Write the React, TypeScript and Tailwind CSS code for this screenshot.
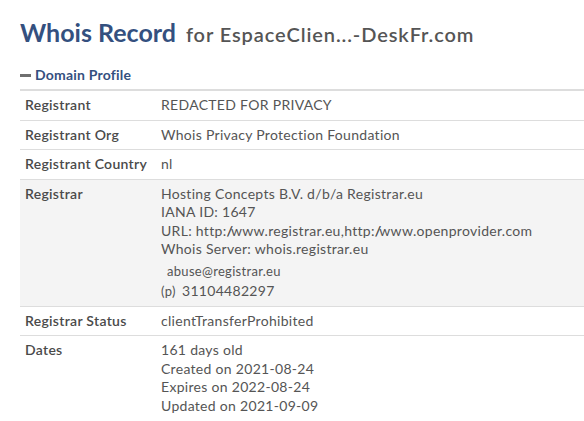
import React from "react";

const Row = ({ label, children, gray }: { label: string; children: React.ReactNode; gray?: boolean }) => (
  <div className={`flex border-b border-[#dddddd] ${gray ? "bg-[#f4f4f4]" : "bg-white"}`}>
    <div className="w-[141px] shrink-0 pl-[5px] py-[5px] font-semibold text-[#4a4a4a]">{label}</div>
    <div className="flex-1 py-[5px] text-[#555555]">{children}</div>
  </div>
);

const Sl = () => <span className="tracking-[-3px] mr-[1px]">//</span>;

export default function App() {
  return (
    <div className="bg-white min-h-[421px] w-[584px] overflow-hidden pl-[20px]" style={{ fontFamily: "Lato, 'Open Sans', sans-serif" }}>
      <div className="pt-[17px] flex items-baseline whitespace-nowrap">
        <span className="text-[25px] font-bold text-[#34507f] leading-[30px]">Whois Record</span>
        <span className="ml-[10px] text-[20px] font-semibold tracking-[0.9px] text-[#555555]">for EspaceClien...-DeskFr.com</span>
      </div>
      <div className="mt-[17px] flex items-center text-[14px] font-bold tracking-[0.2px] text-[#34507f] leading-[18px]">
        <span className="inline-block w-[11px] h-[3px] bg-[#6f6f6f] mr-[4px]"></span>
        Domain Profile
      </div>
      <div className="mt-[5px] border-t-2 border-[#dddddd] text-[14px] tracking-[0.3px] leading-[18.5px] whitespace-nowrap">
        <Row label="Registrant">REDACTED FOR PRIVACY</Row>
        <Row label="Registrant Org">Whois Privacy Protection Foundation</Row>
        <Row label="Registrant Country">nl</Row>
        <Row label="Registrar" gray>
          <div>Hosting Concepts B.V. d/b/a Registrar.eu</div>
          <div>IANA ID: 1647</div>
          <div>URL: http:<Sl />www.registrar.eu,http:<Sl />www.openprovider.com</div>
          <div>Whois Server: whois.registrar.eu</div>
          <div className="mt-[2px] pl-[6px] text-[13px] leading-[20px]">abuse@registrar.eu</div>
          <div className="leading-[20px] flex items-baseline">
            <span className="inline-block w-[21px] shrink-0 text-[13px]">(p)</span>
            <span>31104482297</span>
          </div>
        </Row>
        <Row label="Registrar Status">clientTransferProhibited</Row>
        <div className="flex">
          <div className="w-[141px] shrink-0 pl-[5px] py-[5px] font-semibold text-[#4a4a4a]">Dates</div>
          <div className="flex-1 py-[5px] text-[#555555]">
            <div>161 days old</div>
            <div>Created on 2021-08-24</div>
            <div>Expires on 2022-08-24</div>
            <div>Updated on 2021-09-09</div>
          </div>
        </div>
      </div>
    </div>
  );
}
